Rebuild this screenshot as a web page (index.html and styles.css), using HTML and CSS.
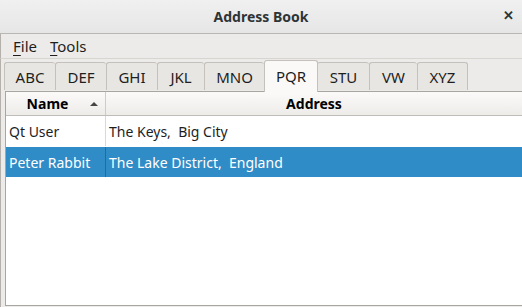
FILE: index.html
```html
<!DOCTYPE html>
<html lang="en">
<head>
    <meta charset="UTF-8">
    <title>Address Book</title>
    <link rel="stylesheet" href="styles.css">
</head>
<body>
    <!-- window title bar -->
    <div class="titlebar">
        <span class="title">Address Book</span>
        <span class="close">&#x2715;</span>
    </div>

    <div class="menubar">
        <span class="menu"><u>F</u>ile</span>
        <span class="menu"><u>T</u>ools</span>
    </div>

    <div class="content">
        <div class="tabs">
            <div class="tab">ABC</div>
            <div class="tab">DEF</div>
            <div class="tab">GHI</div>
            <div class="tab">JKL</div>
            <div class="tab">MNO</div>
            <div class="tab active">PQR</div>
            <div class="tab">STU</div>
            <div class="tab">VW</div>
            <div class="tab">XYZ</div>
        </div>

        <div class="table">
            <div class="row header">
                <div class="cell name">Name <span class="arrow"></span></div>
                <div class="cell addr">Address</div>
            </div>
            <div class="row">
                <div class="cell name">Qt User</div>
                <div class="cell addr">The Keys,&nbsp; Big City</div>
            </div>
            <div class="row selected">
                <div class="cell name">Peter Rabbit</div>
                <div class="cell addr">The Lake District,&nbsp; England</div>
            </div>
        </div>
    </div>
</body>
</html>
```

FILE: styles.css
```css
* {
    box-sizing: border-box;
}
body {
    margin: 0;
    width: 522px;
    height: 307px;
    overflow: hidden;
    background-color: #edebe9;
    font-family: "Noto Sans", sans-serif;
    font-size: 14px;
    color: #1e1e1e;
    display: flex;
    flex-direction: column;
}
.titlebar {
    height: 34px;
    flex-shrink: 0;
    border-bottom: 1px solid #b9b7b4;
    background: linear-gradient(#f0f0f0, #e6e6e6);
    display: flex;
    align-items: center;
    justify-content: center;
    position: relative;
}
.title {
    font-weight: bold;
    color: #2e3436;
    font-size: 14px;
}
.close {
    position: absolute;
    right: 8px;
    top: 6px;
    font-size: 13px;
    font-weight: bold;
    color: #2e3436;
}
.menubar {
    height: 25px;
    flex-shrink: 0;
    display: flex;
    align-items: center;
    gap: 13px;
    padding-left: 12px;
    border-bottom: 1px solid #d8d4d0;
    border-left: 1px solid #b4b1ad;
    font-size: 15px;
}
.menu u {
    text-decoration-thickness: 1px;
    text-underline-offset: 3px;
}
.content {
    flex: 1;
    border-left: 1px solid #b4b1ad;
    padding: 1px 0 0 3px;
    display: flex;
    flex-direction: column;
}
.tabs {
    display: flex;
    align-items: flex-end;
    height: 32px;
    margin-bottom: -1px;
    position: relative;
    z-index: 1;
    font-size: 15px;
}
.tab {
    height: 28px;
    width: 51px;
    border: 1px solid #c4c0bc;
    border-bottom: none;
    border-right: none;
    border-radius: 3px 3px 0 0;
    background: #e8e6e3;
    display: flex;
    align-items: center;
    justify-content: center;
    margin-bottom: 2px;
    color: #1e1e1e;
}
.tab:nth-child(4) { width: 47px; }
.tab:nth-child(5) { width: 60px; }
.tab:nth-child(6) { width: 54px; }
.tab:nth-child(7) { width: 52px; }
.tab:nth-child(8) { width: 48px; }
.tab:nth-child(9) { width: 51px; }
.tab:last-child {
    border-right: 1px solid #c4c0bc;
}
.tab.active {
    height: 32px;
    margin-bottom: 0;
    padding-bottom: 2px;
    background: #faf9f8;
    border-right: 1px solid #c4c0bc;
    margin-right: -1px;
    position: relative;
    z-index: 2;
}
.tab.active + .tab {
    border-left-color: transparent;
}
.table {
    flex: 1;
    background: #ffffff;
    border: 1px solid #a9a6a2;
    border-right: none;
    margin-bottom: 1px;
    margin-left: 1px;
}
.row {
    display: flex;
    height: 30px;
}
.cell {
    display: flex;
    align-items: center;
    padding-left: 3px;
    border-right: 1px solid #d9d9d9;
}
.cell.name {
    width: 100px;
}
.cell.addr {
    flex: 1;
    border-right: none;
}
.header {
    height: 24px;
    border-bottom: 1px solid #c0bdb9;
    background: linear-gradient(#fbfaf9, #eeece9);
    font-weight: bold;
    color: #000;
}
.header .cell {
    justify-content: center;
    border-right-color: #cfcbc7;
}
.header .cell.name {
    position: relative;
    padding-left: 0;
    padding-right: 16px;
}
.header .cell.addr {
    padding-left: 0;
}
.arrow {
    position: absolute;
    right: 7px;
    top: 10px;
    border-left: 4px solid transparent;
    border-right: 4px solid transparent;
    border-bottom: 4px solid #444;
}
.selected {
    background: #308cc6;
    color: #ffffff;
    margin-top: 1px;
}
.selected .cell {
    border-right-color: #1f6ea3;
}
```
